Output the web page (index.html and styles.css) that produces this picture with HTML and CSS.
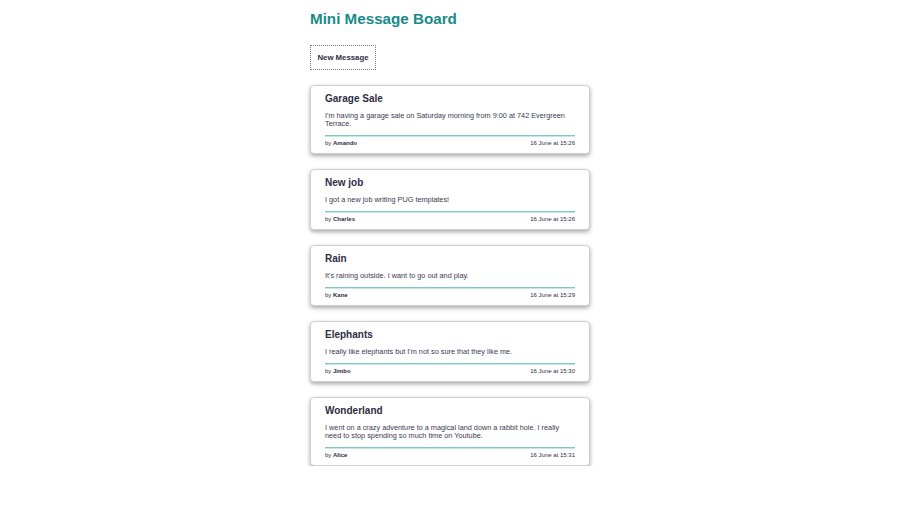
FILE: index.html
```html
<!DOCTYPE html>
<html lang="en">
<head>
<meta charset="utf-8">
<title>Mini Message Board</title>
<link rel="stylesheet" href="styles.css">
</head>
<body>
<main class="board">
  <h1 class="board-title">Mini Message Board</h1>
  <a class="new-btn" href="#">New Message</a>
  <ul class="messages">
    <li class="card">
      <h2 class="card-title">Garage Sale</h2>
      <p class="card-text">I'm having a garage sale on Saturday morning from 9:00 at 742 Evergreen Terrace.</p>
      <div class="card-footer"><span>by <b>Amando</b></span><span>16 June at 15:26</span></div>
    </li>
    <li class="card">
      <h2 class="card-title">New job</h2>
      <p class="card-text">I got a new job writing PUG templates!</p>
      <div class="card-footer"><span>by <b>Charles</b></span><span>16 June at 15:26</span></div>
    </li>
    <li class="card">
      <h2 class="card-title">Rain</h2>
      <p class="card-text">It's raining outside. I want to go out and play.</p>
      <div class="card-footer"><span>by <b>Kane</b></span><span>16 June at 15:29</span></div>
    </li>
    <li class="card">
      <h2 class="card-title">Elephants</h2>
      <p class="card-text">I really like elephants but I'm not so sure that they like me.</p>
      <div class="card-footer"><span>by <b>Jimbo</b></span><span>16 June at 15:30</span></div>
    </li>
    <li class="card">
      <h2 class="card-title">Wonderland</h2>
      <p class="card-text">I went on a crazy adventure to a magical land down a rabbit hole. I really need to stop spending so much time on Youtube.</p>
      <div class="card-footer"><span>by <b>Alice</b></span><span>16 June at 15:31</span></div>
    </li>
  </ul>
</main>
</body>
</html>
```
FILE: styles.css
```css
* { box-sizing: border-box; }
html, body { margin: 0; padding: 0; background: #fff; }
body {
  font-family: "Liberation Sans", Arial, sans-serif;
  color: #2d2d47;
}
.board {
  width: 280px;
  margin: 0 auto;
  padding-top: 9px;
  display: flex;
  flex-direction: column;
  align-items: flex-start;
}
.board-title {
  margin: 0;
  font-size: 15.2px;
  line-height: 20px;
  font-weight: bold;
  color: #178b87;
}
.new-btn {
  margin-top: 16px;
  display: inline-block;
  width: 66px;
  height: 25px;
  line-height: 23px;
  text-align: center;
  border: 1px dotted #7a7a7a;
  font-size: 7.8px;
  font-weight: bold;
  color: #2d2d47;
  text-decoration: none;
}
.messages {
  list-style: none;
  margin: 15px 0 0;
  padding: 0;
  width: 100%;
  display: flex;
  flex-direction: column;
  gap: 15px;
}
.card {
  border: 1px solid #cfcfcf;
  border-radius: 4px;
  box-shadow: 0 2px 4px rgba(0,0,0,0.35);
  padding: 7px 14px 6px;
  background: #fff;
}
.card-title {
  margin: 0;
  font-size: 10px;
  line-height: 12px;
  font-weight: bold;
}
.card-text {
  margin: 7px 0 0;
  font-size: 7.3px;
  line-height: 8px;
  padding-bottom: 7px;
  border-bottom: 1px solid #7ec8c3;
  box-shadow: 0 1px 0 #c6e7e4;
  color: #3a3a52;
}
.card-footer {
  margin-top: 4px;
  display: flex;
  justify-content: space-between;
  font-size: 6px;
  line-height: 7px;
}
```
